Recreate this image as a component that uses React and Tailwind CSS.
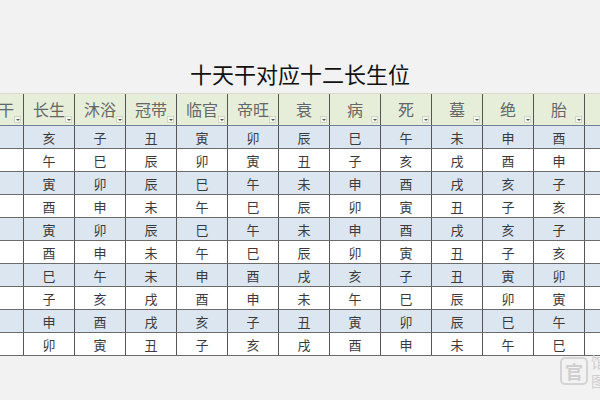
import React from "react";

const heads = ["长生", "沐浴", "冠带", "临官", "帝旺", "衰", "病", "死", "墓", "绝", "胎"];

const rows = [
  "亥子丑寅卯辰巳午未申酉",
  "午巳辰卯寅丑子亥戌酉申",
  "寅卯辰巳午未申酉戌亥子",
  "酉申未午巳辰卯寅丑子亥",
  "寅卯辰巳午未申酉戌亥子",
  "酉申未午巳辰卯寅丑子亥",
  "巳午未申酉戌亥子丑寅卯",
  "子亥戌酉申未午巳辰卯寅",
  "申酉戌亥子丑寅卯辰巳午",
  "卯寅丑子亥戌酉申未午巳",
];

const Arrow = () => (
  <span className="absolute right-[2px] bottom-[2px] w-[7px] h-[7px] bg-[#f4f6f0] border border-[#cfd6c4] flex items-center justify-center">
    <span className="block w-0 h-0 border-l-[2px] border-r-[2px] border-t-[2px] border-l-transparent border-r-transparent border-t-[#555]"></span>
  </span>
);

export default function App() {
  return (
    <div
      className="relative w-[600px] h-[400px] bg-[#f2f2f2] overflow-hidden"
      style={{ fontFamily: '"Noto Sans CJK SC", "Noto Sans", sans-serif' }}
    >
      {/* title */}
      <div className="mt-[61px] h-[24px] leading-[24px] text-center text-[22px] font-normal text-[#111]">
        十天干对应十二长生位
      </div>

      {/* table */}
      <div className="mt-[8px] border-t border-[#d6dccb]">
        <div className="flex h-[32px] bg-[#e6eed9] border-b border-[#6f7f94]">
          <div className="relative w-[24px] border-r border-[#555] flex items-center overflow-hidden">
            <span className="text-[16px] text-[#666] leading-none -ml-[2px] -mt-[2px]">干</span>
            <Arrow />
          </div>
          {heads.map((h) => (
            <div
              key={h}
              className="relative w-[51px] border-r border-[#555] flex items-center justify-center pb-[2px] text-[16px] text-[#666] leading-none"
            >
              {h}
              <Arrow />
            </div>
          ))}
          <div className="flex-1"></div>
        </div>

        {rows.map((r, i) => (
          <div
            key={i}
            className={
              "flex h-[23px] border-b border-[#6b6b6b] " +
              (i % 2 === 0 ? "bg-[#dce6f1]" : "bg-white")
            }
          >
            <div className="w-[24px] border-r border-[#555]"></div>
            {r.split("").map((c, j) => (
              <div
                key={j}
                className="w-[51px] border-r border-[#555] flex items-center justify-center text-[13px] text-[#3a3a3a] leading-none"
              >
                {c}
              </div>
            ))}
            <div className="flex-1"></div>
          </div>
        ))}
      </div>

      {/* watermark */}
      <div className="absolute left-[560px] top-[357px] w-[28px] h-[28px] rounded-[5px] border-2 border-[#d4d4d4] flex items-center justify-center text-[18px] font-bold text-[#cfcfcf] leading-none">
        官
      </div>
      <div className="absolute left-[591px] top-[352px] flex flex-col text-[15px] text-[#d0d0d0] leading-[19px]">
        <span>馆</span>
        <span>图</span>
      </div>
    </div>
  );
}
